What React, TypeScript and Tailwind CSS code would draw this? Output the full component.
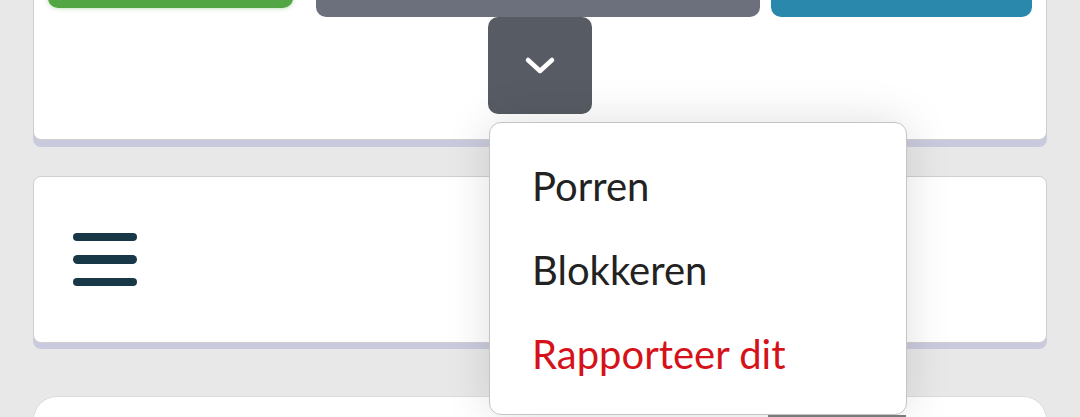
import { useState } from "react";

const menuItems = [
  { label: "Porren", danger: false },
  { label: "Blokkeren", danger: false },
  { label: "Rapporteer dit", danger: true },
];

function Chevron() {
  return (
    <svg width="32" height="20" viewBox="0 0 32 20" fill="none">
      <polyline
        points="4,4 16,15 28,4"
        stroke="white"
        strokeWidth="4.5"
        strokeLinecap="round"
        strokeLinejoin="round"
      />
    </svg>
  );
}

function Hamburger() {
  return (
    <div className="flex flex-col gap-[14px] w-[64px]">
      <span className="block h-[8.5px] rounded-full bg-[#183848]" />
      <span className="block h-[8.5px] rounded-full bg-[#183848]" />
      <span className="block h-[8.5px] rounded-full bg-[#183848]" />
    </div>
  );
}

export default function App() {
  const [open, setOpen] = useState(true);

  return (
    <div
      className="relative h-[417px] overflow-hidden bg-[#e8e8e8] px-[33px]"
      style={{ fontFamily: "Lato, 'Open Sans', sans-serif" }}
    >
      {/* action card */}
      <div className="mt-[-40px] h-[180px] rounded-lg border border-[#cfcfcf] bg-white shadow-[0_7px_0_#cacade]">
        <div className="flex items-start px-[14px] pt-[9px]">
          <button className="h-[38px] w-[245px] rounded-[10px] bg-[#52a744] shadow-[0_0_5px_rgba(82,167,68,0.45)]" />
          <button className="ml-[23px] h-[47px] w-[444px] rounded-[10px] bg-[#6c707c]" />
          <button className="ml-[11px] h-[47px] w-[261px] rounded-[10px] bg-[#2a88ad]" />
        </div>
        <div className="flex justify-center">
          <button
            onClick={() => setOpen(!open)}
            className="flex h-[97px] w-[104px] items-center justify-center rounded-[10px] bg-[#575b63]"
          >
            <Chevron />
          </button>
        </div>
      </div>

      {/* menu card */}
      <div className="mt-[36px] flex h-[167px] items-center rounded-lg border border-[#cfcfcf] bg-white pl-[39px] shadow-[0_6px_0_#cacade]">
        <Hamburger />
      </div>

      <div className="mt-[53px] h-[60px] rounded-t-3xl border border-[#dcdcdc] bg-white" />

      {open && (
        <>
          <div className="absolute left-[489px] top-[122px] h-[293px] w-[418px] rounded-xl border border-[#c4c4c4] bg-white pl-[42px] pt-[21px] shadow-[0_0_45px_rgba(0,0,0,0.13)]">
            {menuItems.map((item) => (
              <div
                key={item.label}
                className={`text-[40px] leading-[84px] ${
                  item.danger ? "text-[#d5121a]" : "text-[#222222]"
                }`}
              >
                {item.label}
              </div>
            ))}
          </div>
          <div className="absolute left-[768px] top-[415px] h-[2px] w-[138px] bg-[#7a7a7a]" />
        </>
      )}
    </div>
  );
}
